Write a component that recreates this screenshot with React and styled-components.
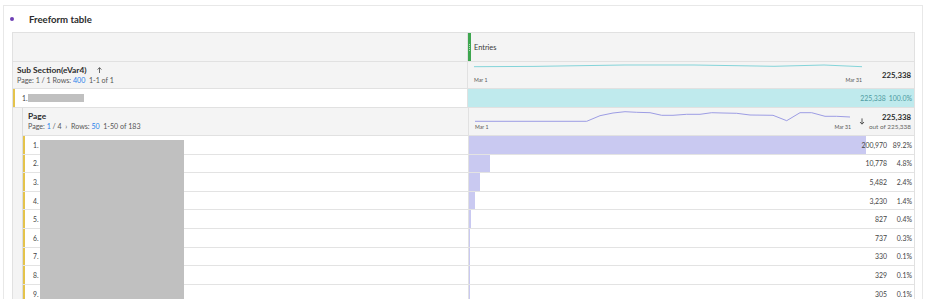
import styled, { createGlobalStyle } from "styled-components";

const GlobalStyle = createGlobalStyle`
  * { box-sizing: border-box; }
  body {
    margin: 0;
    background: #fff;
    font-family: Lato, "Liberation Sans", sans-serif;
    color: #4b4b4b;
  }
`;

// page rows, the bar width comes from pct
const rows = [
  { n: 1, value: "200,970", pct: 89.2 },
  { n: 2, value: "10,778", pct: 4.8 },
  { n: 3, value: "5,482", pct: 2.4 },
  { n: 4, value: "3,230", pct: 1.4 },
  { n: 5, value: "827", pct: 0.4 },
  { n: 6, value: "737", pct: 0.3 },
  { n: 7, value: "330", pct: 0.1 },
  { n: 8, value: "329", pct: 0.1 },
  { n: 9, value: "305", pct: 0.1 },
];

const tealTrend = [
  [0, 4.7], [60, 4.4], [150, 3], [220, 3], [300, 4.3], [350, 3], [388, 4.7],
];

const purpleTrend = [
  [0, 13.3], [111.7, 13.3], [125, 7.7], [138, 5], [150, 3.7], [161.7, 4.3],
  [175, 4.7], [186.7, 7.3], [198, 7.3], [211.7, 6.3], [225, 6.3], [236.7, 4.7],
  [248, 5], [261.7, 5.3], [275, 7], [298, 7.3], [311.7, 12.7], [325, 4.7],
  [336.7, 4.7], [350, 8.3], [361.7, 8.3], [375, 9],
];

const Panel = styled.div`
  margin: 5px 0 0 3px;
  width: 920px;
  height: 294px;
  border: 1px solid #e8e8e8;
  border-bottom: none;
  overflow: hidden;
`;

const TitleBar = styled.div`
  height: 26px;
  display: flex;
  align-items: center;
  padding-left: 6px;
  gap: 15px;
`;

const Dot = styled.span`
  width: 4px;
  height: 4px;
  border-radius: 50%;
  background: #6e3fb5;
`;

const Title = styled.span`
  font-size: 9.6px;
  font-weight: 700;
  color: #2c2c2c;
`;

const Table = styled.div`
  margin-left: 8px;
  width: 903px;
  border: 1px solid #e1e1e1;
  border-bottom: none;
`;

const Row = styled.div`
  display: grid;
  grid-template-columns: ${(p) => (p.nested ? "446px" : "455px")} 1fr;
  height: ${(p) => p.h}px;
  background: ${(p) => p.bg || "#fff"};
  border-bottom: 1px solid ${(p) => p.line || "#e1e1e1"};
`;

const LeftCell = styled.div`
  border-right: 1px solid #e1e1e1;
  border-left: ${(p) => (p.mark ? "2px solid #e4c34b" : "none")};
  padding-left: ${(p) => p.pad || 0}px;
  display: flex;
  flex-direction: ${(p) => (p.stack ? "column" : "row")};
  justify-content: ${(p) => (p.stack ? "center" : "flex-start")};
  align-items: ${(p) => (p.stack ? "flex-start" : "center")};
  min-width: 0;
`;

const HeadCell = styled.div`
  display: flex;
  align-items: center;
`;

const Grip = styled.span`
  width: 3px;
  align-self: stretch;
  background: #3ea64f;
  display: flex;
  flex-direction: column;
  justify-content: center;
  align-items: center;
  gap: 1px;

  i {
    width: 1px;
    height: 1px;
    background: #a9dcb1;
  }
`;

const HeadLabel = styled.span`
  font-size: 7.4px;
  color: #3a3a3a;
  margin-left: 3px;
`;

const DimName = styled.div`
  font-size: 8.4px;
  font-weight: 700;
  color: #2c2c2c;
  line-height: 10px;
  display: flex;
  align-items: center;
  gap: 10px;
`;

const Pager = styled.div`
  font-size: 7.1px;
  color: #555;
  line-height: 10px;
  white-space: nowrap;
  margin-top: 1px;

  b {
    font-weight: 400;
    color: #2680eb;
  }
`;

const TrendCell = styled.div`
  display: flex;
  align-items: stretch;
  padding: 0 3px 0 6px;
`;

const TrendBox = styled.div`
  width: ${(p) => p.w}px;
  display: flex;
  flex-direction: column;
`;

const Dates = styled.div`
  display: flex;
  justify-content: space-between;
  font-size: 5.2px;
  color: #555;
  line-height: 6px;
  margin-top: ${(p) => p.gap}px;
`;

const Total = styled.div`
  margin-left: auto;
  align-self: center;
  font-size: 7.8px;
  font-weight: 700;
  color: #2c2c2c;
`;

const SortIcon = styled.svg`
  align-self: center;
  margin-left: 8px;
`;

const Totals = styled.div`
  margin-left: auto;
  align-self: center;
  display: flex;
  flex-direction: column;
  align-items: flex-end;
  line-height: 10px;

  strong {
    font-size: 7.8px;
    color: #2c2c2c;
  }

  span {
    font-size: 6.4px;
    color: #666;
    line-height: 9px;
  }
`;

const Num = styled.span`
  font-size: 6.8px;
  color: #444;
`;

const Redact = styled.span`
  display: inline-block;
  width: ${(p) => p.w}px;
  height: ${(p) => p.h}px;
  background: #c0c0c0;
`;

const FillCell = styled.div`
  display: grid;
  background: ${(p) => p.bg || "transparent"};
`;

const Bar = styled.div`
  grid-area: 1 / 1;
  background: #c9c9f1;
  min-width: 1px;
`;

const Values = styled.div`
  grid-area: 1 / 1;
  display: flex;
  justify-content: flex-end;
  align-items: center;
  padding-right: 2px;
  font-size: 6.9px;
  color: ${(p) => p.tone || "#444"};
`;

const Pct = styled.span`
  min-width: 22px;
  margin-left: 3px;
  text-align: right;
`;

const Nested = styled.div`
  background: #f4f4f4;
  padding-left: 9px;
`;

const NestedBody = styled.div`
  border-left: 1px solid #dcdcdc;
  position: relative;
`;

// the grey block that hides the page names, drawn over the rows
const NameMask = styled.div`
  position: absolute;
  left: 17px;
  top: 32px;
  width: 144px;
  height: 200px;
  background: #c0c0c0;
`;

function Trend({ points, w, h, color }) {
  const d = points.map(([x, y], i) => `${i ? "L" : "M"}${x},${y}`).join(" ");
  return (
    <svg width={w} height={h} viewBox={`0 0 ${w} ${h}`}>
      <path d={d} fill="none" stroke={color} strokeWidth="1" strokeLinejoin="round" />
    </svg>
  );
}

export default function App() {
  return (
    <>
      <GlobalStyle />
      <Panel>
        <TitleBar>
          <Dot />
          <Title>Freeform table</Title>
        </TitleBar>
        <Table>
          <Row h={29} bg="#f4f4f4">
            <LeftCell />
            <HeadCell>
              <Grip>
                <i />
                <i />
                <i />
                <i />
              </Grip>
              <HeadLabel>Entries</HeadLabel>
            </HeadCell>
          </Row>

          <Row h={27} bg="#f4f4f4">
            <LeftCell stack pad={4}>
              <DimName>
                Sub Section(eVar4)
                <svg width="5" height="6" viewBox="0 0 5 6">
                  <path d="M2.5 6V0.8M0.6 2.6L2.5 0.6L4.4 2.6" fill="none" stroke="#444" strokeWidth="0.8" />
                </svg>
              </DimName>
              <Pager>
                Page: 1 / 1 Rows: <b>400</b> &nbsp;1-1 of 1
              </Pager>
            </LeftCell>
            <TrendCell>
              <TrendBox w={388}>
                <Trend points={tealTrend} w={388} h={10} color="#83d4d9" />
                <Dates gap={5}>
                  <span>Mar 1</span>
                  <span>Mar 31</span>
                </Dates>
              </TrendBox>
              <Total>225,338</Total>
            </TrendCell>
          </Row>

          <Row h={19}>
            <LeftCell mark pad={7}>
              <Num>1.</Num>
              <Redact w={56} h={8} />
            </LeftCell>
            <FillCell bg="#bfeaed">
              <Values tone="#4e9aa0">
                <span>225,338</span>
                <Pct>100.0%</Pct>
              </Values>
            </FillCell>
          </Row>

          <Nested>
            <NestedBody>
              <Row nested h={28} bg="#f4f4f4">
                <LeftCell stack pad={5}>
                  <DimName>Page</DimName>
                  <Pager>
                    Page: <b>1</b> / 4 &nbsp;›&nbsp; Rows: <b>50</b> &nbsp;1-50 of 183
                  </Pager>
                </LeftCell>
                <TrendCell>
                  <TrendBox w={376}>
                    <Trend points={purpleTrend} w={376} h={16} color="#9d9de4" />
                    <Dates gap={0}>
                      <span>Mar 1</span>
                      <span>Mar 31</span>
                    </Dates>
                  </TrendBox>
                  <SortIcon width="6" height="7" viewBox="0 0 6 7">
                    <path d="M3 0.4V6M1 4L3 6.2L5 4" fill="none" stroke="#444" strokeWidth="0.9" />
                  </SortIcon>
                  <Totals>
                    <strong>225,338</strong>
                    <span>out of 225,338</span>
                  </Totals>
                </TrendCell>
              </Row>

              {rows.map((r) => (
                <Row nested key={r.n} h={18.6} line="#e3e3e3">
                  <LeftCell mark pad={8}>
                    <Num>{r.n}.</Num>
                  </LeftCell>
                  <FillCell>
                    <Bar style={{ width: `${r.pct}%` }} />
                    <Values>
                      <span>{r.value}</span>
                      <Pct>{r.pct.toFixed(1)}%</Pct>
                    </Values>
                  </FillCell>
                </Row>
              ))}
              <NameMask />
            </NestedBody>
          </Nested>
        </Table>
      </Panel>
    </>
  );
}
